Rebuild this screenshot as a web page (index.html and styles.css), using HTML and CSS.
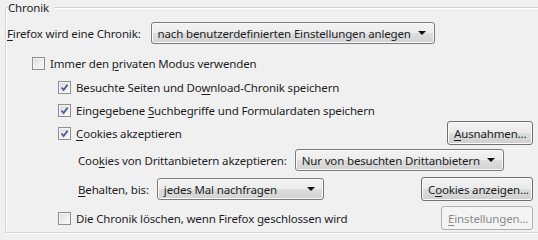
FILE: index.html
```html
<!DOCTYPE html>
<html lang="de">
<head>
  <meta charset="UTF-8">
  <title>Chronik</title>
  <link rel="stylesheet" href="styles.css">
</head>
<body>
  <fieldset class="group">
    <legend>Chronik</legend>

    <div class="row first">
      <span class="label"><u>F</u>irefox wird eine Chronik:</span>
      <div class="combo combo-mode">
        <span>nach benutzerdefinierten Einstellungen anlegen</span>
        <i class="arrow"></i>
      </div>
    </div>

    <div class="row spaced indent1">
      <span class="check"></span>
      <span>Immer den <u>p</u>rivaten Modus verwenden</span>
    </div>

    <div class="row indent2">
      <span class="check on"><svg viewBox="0 0 9 9"><path d="M1.5 4.5 L3.6 7 L7.6 1.6" /></svg></span>
      <span>Besuchte Seiten und Do<u>w</u>nload-Chronik speichern</span>
    </div>

    <div class="row short indent2">
      <span class="check on"><svg viewBox="0 0 9 9"><path d="M1.5 4.5 L3.6 7 L7.6 1.6" /></svg></span>
      <span>Eingegebene <u>S</u>uchbegriffe und Formulardaten speichern</span>
    </div>

    <div class="row indent2">
      <span class="check on"><svg viewBox="0 0 9 9"><path d="M1.5 4.5 L3.6 7 L7.6 1.6" /></svg></span>
      <span><u>C</u>ookies akzeptieren</span>
      <button class="btn btn-exceptions"><u>A</u>usnahmen...</button>
    </div>

    <div class="row sub indent3 mt3">
      <span class="label">Coo<u>k</u>ies von Drittanbietern akzeptieren:</span>
      <div class="combo combo-third">
        <span>Nur von besuchten Drittanbietern</span>
        <i class="arrow"></i>
      </div>
    </div>

    <div class="row indent3 mt5">
      <span class="label"><u>B</u>ehalten, bis:</span>
      <div class="combo combo-keep">
        <span>jedes Mal nachfragen</span>
        <i class="arrow"></i>
      </div>
      <button class="btn btn-show">C<u>o</u>okies anzeigen...</button>
    </div>

    <div class="row indent2 mt5">
      <span class="check"></span>
      <span>Die Chronik löschen, wenn Firefox geschlossen wird</span>
      <button class="btn btn-settings" disabled><u>E</u>instellungen...</button>
    </div>
  </fieldset>
</body>
</html>
```

FILE: styles.css
```css
html, body {
  margin: 0;
  padding: 0;
}
body {
  width: 538px;
  height: 240px;
  overflow: hidden;
  background: #f0f0f0;
  color: #1e1e1e;
  font-family: "Noto Sans", "Liberation Sans", sans-serif;
  font-size: 11.5px;
  letter-spacing: -0.15px;
  line-height: 15px;
}
u {
  text-decoration: underline;
  text-underline-offset: 2px;
}
.group {
  margin: 0 -10px 0 5px;
  padding: 0 14px 2px 1px;
  border: 1px solid #d3d3d3;
  border-radius: 2px;
  box-shadow: inset 1px 1px 0 #fff, 1px 1px 0 #fff;
  min-width: 0;
}
.group legend {
  margin-left: 1px;
  padding: 0 5px 0 0;
  background: #f0f0f0;
}
.row {
  display: flex;
  align-items: center;
  height: 24px;
  white-space: nowrap;
}
.row.first {
  margin-top: 6px;
}
.row.spaced {
  margin-top: 6px;
}
.row.short {
  height: 22px;
}
.mt3 {
  margin-top: 3px;
}
.mt5 {
  margin-top: 5px;
}
.indent1 {
  padding-left: 25px;
}
.indent2 {
  padding-left: 51px;
}
.indent3 {
  padding-left: 71px;
}
.label {
  margin-right: 8px;
}
.check {
  box-sizing: border-box;
  width: 13px;
  height: 13px;
  margin-right: 5px;
  flex: none;
  border: 1px solid #8e8f8f;
  background: linear-gradient(135deg, #dcdcdc, #fbfbfb);
  box-shadow: inset 0 0 0 1px #f4f4f4;
  display: flex;
  align-items: center;
  justify-content: center;
}
.check svg {
  width: 9px;
  height: 9px;
}
.check path {
  fill: none;
  stroke: #4a5f97;
  stroke-width: 1.8;
}
.combo {
  box-sizing: border-box;
  height: 22px;
  display: flex;
  align-items: center;
  justify-content: space-between;
  padding: 0 8px 0 6px;
  border: 1px solid #7a7a7a;
  border-radius: 3px;
  background: linear-gradient(#f3f3f3 0%, #ececec 50%, #dedede 51%, #d2d2d2 100%);
  box-shadow: inset 0 0 0 1px #fafafa;
}
.arrow {
  width: 0;
  height: 0;
  border-left: 4px solid transparent;
  border-right: 4px solid transparent;
  border-top: 4px solid #111;
}
.combo-mode {
  width: 284px;
  margin-left: 2px;
}
.combo-third {
  width: 209px;
}
.combo-keep {
  width: 167px;
}
.btn {
  box-sizing: border-box;
  height: 24px;
  margin-left: auto;
  padding: 0 6px;
  font: inherit;
  letter-spacing: inherit;
  color: #1e1e1e;
  border: 1px solid #707070;
  border-radius: 3px;
  background: linear-gradient(#f2f2f2 0%, #ebebeb 50%, #dddddd 51%, #cfcfcf 100%);
  box-shadow: inset 0 0 0 1px #fcfcfc;
}
.btn-exceptions {
  width: 86px;
}
.btn-show {
  width: 112px;
}
.btn-settings {
  width: 92px;
}
.btn:disabled {
  color: #8a8a8a;
  border-color: #adb2b5;
  background: #f4f4f4;
  box-shadow: none;
}
```
